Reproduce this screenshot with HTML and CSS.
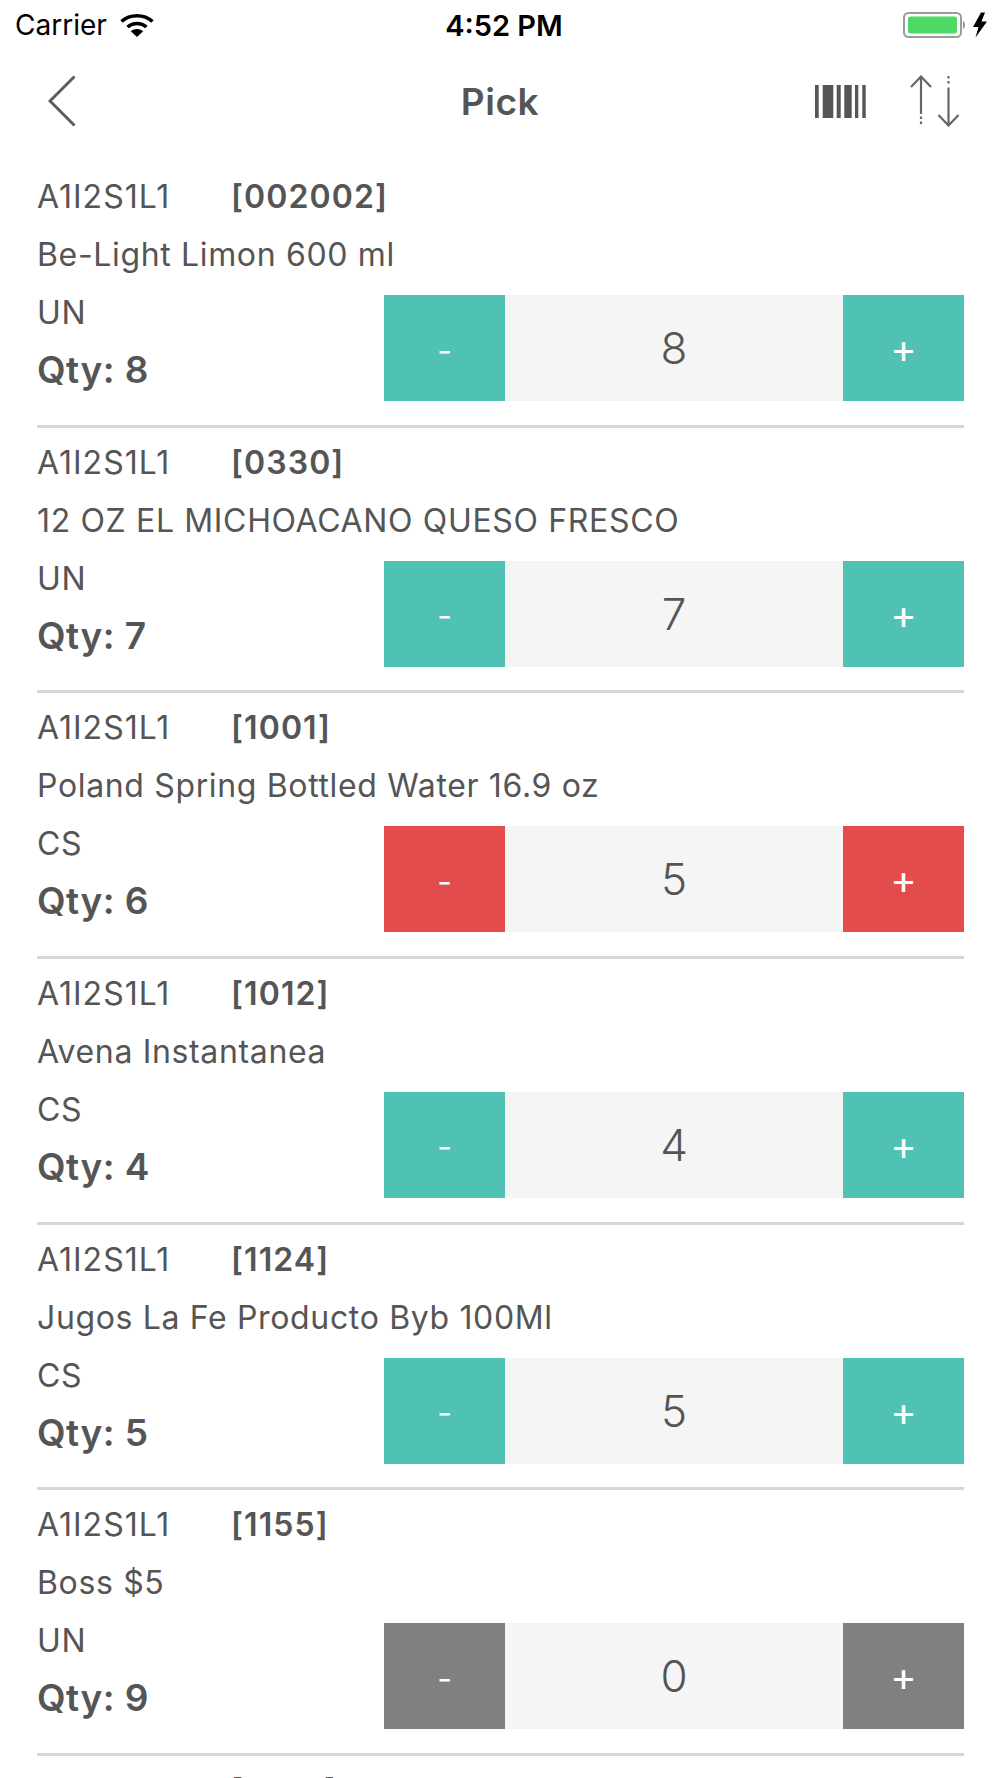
FILE: index.html
```html
<!DOCTYPE html>
<html lang="en">
<head>
<meta charset="utf-8">
<title>Pick</title>
<link rel="stylesheet" href="styles.css">
</head>
<body>
<div class="screen">
  <div class="status">
    <div class="status-left">
      <span class="carrier">Carrier</span>
      <svg class="wifi" viewBox="0 0 34 24" width="34" height="24">
        <path d="M1.5 8.500C10 0.800 24 0.800 32.500 8.500" fill="none" stroke="#000" stroke-width="3.600"/>
        <path d="M7.500 14C13 9.300 21 9.300 26.500 14" fill="none" stroke="#000" stroke-width="3.600"/>
        <path d="M10.800 18.200C14.500 15.200 19.500 15.200 23.200 18.200L17 24Z" fill="#000"/>
      </svg>
    </div>
    <span class="time">4:52 PM</span>
    <div class="status-right">
      <svg class="battery" viewBox="0 0 86 26" width="86" height="26">
        <rect x="2" y="1" width="57" height="24" rx="4.500" fill="none" stroke="#9b9b9b" stroke-width="2"/>
        <rect x="6" y="4.500" width="49" height="17" rx="2.500" fill="#4cd964"/>
        <path d="M61 9C63.500 10 63.500 16 61 17Z" fill="#8e8e8e"/>
        <path d="M79 0.500L71 15H76.500L73.500 25.500L85 9.500H79.500L83 0.500Z" fill="#000"/>
      </svg>
    </div>
  </div>
  <div class="nav">
    <div class="nav-side">
      <svg class="back" viewBox="0 0 28 52" width="28" height="52">
        <path d="M26.500 1.500L2 26L26.500 50.500" fill="none" stroke="#5c5c5c" stroke-width="3"/>
      </svg>
    </div>
    <div class="nav-title">Pick</div>
    <div class="nav-side nav-actions">
      <svg class="barcode" viewBox="0 0 51 33" width="51" height="33">
        <g fill="#555">
          <rect x="0" width="3.700" height="33"/>
          <rect x="7.700" width="10.600" height="33"/>
          <rect x="21.700" width="4" height="33"/>
          <rect x="29.300" width="7.400" height="33"/>
          <rect x="40" width="3.300" height="33"/>
          <rect x="47.300" width="3.400" height="33"/>
        </g>
      </svg>
      <svg class="sort" viewBox="0 0 50 52" width="50" height="52">
        <g fill="none" stroke="#666" stroke-width="2.200">
          <path d="M11 1.500V39"/>
          <path d="M11 41.500V51" stroke-dasharray="2.500 2.500"/>
          <path d="M1 12L11 1.500L21 12"/>
          <path d="M38.500 1V10" stroke-dasharray="2.500 2.500"/>
          <path d="M38.500 12.500V50.500"/>
          <path d="M28.500 40L38.500 50.500L48.500 40"/>
        </g>
      </svg>
    </div>
  </div>
  <div class="list">
    <div class="row">
      <div class="line"><span class="loc">A1I2S1L1</span><span class="code">[002002]</span></div>
      <div class="line">Be-Light Limon 600 ml</div>
      <div class="bottom">
        <div class="info"><div class="line">UN</div><div class="line qty">Qty: 8</div></div>
        <div class="stepper"><div class="btn btn-green"><span class="minus">-</span></div><div class="val">8</div><div class="btn btn-green"><span class="plus">+</span></div></div>
      </div>
    </div>
    <div class="row">
      <div class="line"><span class="loc">A1I2S1L1</span><span class="code">[0330]</span></div>
      <div class="line">12 OZ EL MICHOACANO QUESO FRESCO</div>
      <div class="bottom">
        <div class="info"><div class="line">UN</div><div class="line qty">Qty: 7</div></div>
        <div class="stepper"><div class="btn btn-green"><span class="minus">-</span></div><div class="val">7</div><div class="btn btn-green"><span class="plus">+</span></div></div>
      </div>
    </div>
    <div class="row">
      <div class="line"><span class="loc">A1I2S1L1</span><span class="code">[1001]</span></div>
      <div class="line">Poland Spring Bottled Water 16.9 oz</div>
      <div class="bottom">
        <div class="info"><div class="line">CS</div><div class="line qty">Qty: 6</div></div>
        <div class="stepper"><div class="btn btn-red"><span class="minus">-</span></div><div class="val">5</div><div class="btn btn-red"><span class="plus">+</span></div></div>
      </div>
    </div>
    <div class="row">
      <div class="line"><span class="loc">A1I2S1L1</span><span class="code">[1012]</span></div>
      <div class="line">Avena Instantanea</div>
      <div class="bottom">
        <div class="info"><div class="line">CS</div><div class="line qty">Qty: 4</div></div>
        <div class="stepper"><div class="btn btn-green"><span class="minus">-</span></div><div class="val">4</div><div class="btn btn-green"><span class="plus">+</span></div></div>
      </div>
    </div>
    <div class="row">
      <div class="line"><span class="loc">A1I2S1L1</span><span class="code">[1124]</span></div>
      <div class="line">Jugos La Fe Producto Byb 100Ml</div>
      <div class="bottom">
        <div class="info"><div class="line">CS</div><div class="line qty">Qty: 5</div></div>
        <div class="stepper"><div class="btn btn-green"><span class="minus">-</span></div><div class="val">5</div><div class="btn btn-green"><span class="plus">+</span></div></div>
      </div>
    </div>
    <div class="row">
      <div class="line"><span class="loc">A1I2S1L1</span><span class="code">[1155]</span></div>
      <div class="line">Boss $5</div>
      <div class="bottom">
        <div class="info"><div class="line">UN</div><div class="line qty">Qty: 9</div></div>
        <div class="stepper"><div class="btn btn-gray"><span class="minus">-</span></div><div class="val">0</div><div class="btn btn-gray"><span class="plus">+</span></div></div>
      </div>
    </div>
    <div class="row">
      <div class="line"><span class="loc">A1I2S1L1</span><span class="code">[1200]</span></div>
    </div>
  </div>
</div>
</body>
</html>
```
FILE: styles.css
```css
html, body {
  margin: 0;
  padding: 0;
  background: #fff;
}
.screen {
  width: 1000px;
  height: 1778px;
  overflow: hidden;
  font-family: Inter, "Liberation Sans", sans-serif;
  color: #555;
}
.status {
  height: 53px;
  display: flex;
  align-items: center;
  padding: 0 12px 3px 15px;
  box-sizing: border-box;
  color: #000;
}
.status-left, .status-right {
  flex: 1;
  display: flex;
  align-items: center;
}
.status-right {
  justify-content: flex-end;
}
.carrier {
  font-size: 28px;
}
.wifi {
  margin-left: 13px;
}
.time {
  font-size: 29px;
  font-weight: 600;
  padding-left: 5px;
}
.nav {
  height: 109px;
  display: flex;
  align-items: center;
  padding: 0 40px 13px 40px;
  box-sizing: border-box;
}
.nav-side {
  flex: 1;
  display: flex;
  align-items: center;
}
.back {
  margin-left: 8px;
}
.nav-actions {
  justify-content: flex-end;
  gap: 44px;
}
.nav-title {
  font-size: 37px;
  font-weight: 600;
  letter-spacing: 0.6px;
  padding-top: 1px;
}
.list {
  padding: 0 36px 0 37px;
}
.row {
  height: 265.67px;
  box-sizing: border-box;
  padding-top: 6px;
  border-bottom: 3px solid #d6d6d6;
}
.line {
  height: 58px;
  line-height: 58px;
  font-size: 32px;
  letter-spacing: 0.65px;
  white-space: nowrap;
  display: flex;
}
.loc {
  width: 194px;
  letter-spacing: 1px;
}
.code {
  font-weight: 600;
  letter-spacing: 1.1px;
}
.qty {
  margin-top: -1px;
  font-size: 37px;
  font-weight: 600;
  letter-spacing: 0.5px;
}
.bottom {
  display: flex;
  justify-content: space-between;
}
.stepper {
  width: 580px;
  height: 106px;
  margin-top: 11px;
  display: flex;
  background: #f5f5f5;
}
.btn {
  width: 121px;
  display: flex;
  align-items: center;
  justify-content: center;
  color: #fff;
  font-size: 32px;
  padding-top: 6px;
  box-sizing: border-box;
}
.minus {
  margin-bottom: 2px;
}
.plus {
  font-size: 40px;
  line-height: 40px;
  margin-bottom: 4px;
}
.btn-green { background: #4fc2b3; }
.btn-red { background: #e24c4c; }
.btn-gray { background: #808080; }
.val {
  flex: 1;
  display: flex;
  align-items: center;
  justify-content: center;
  font-size: 44px;
  font-weight: 300;
}
```
